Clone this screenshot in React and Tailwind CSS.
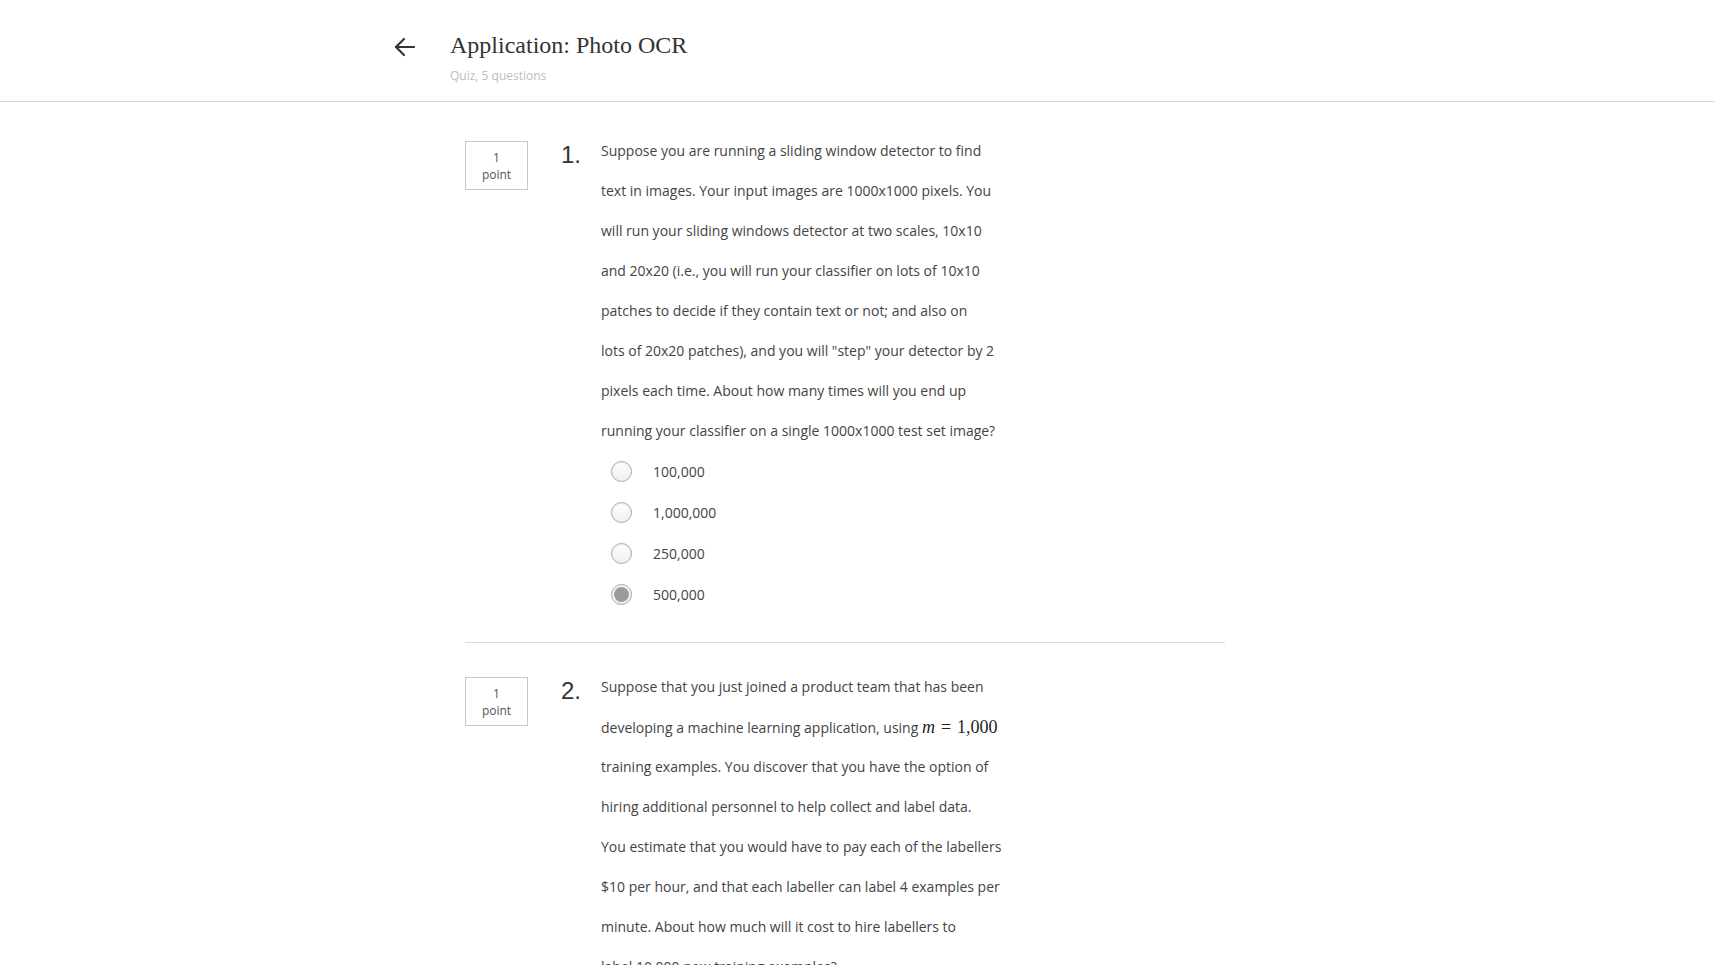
import React from 'react';

const q1Lines = [
    'Suppose you are running a sliding window detector to find',
    'text in images. Your input images are 1000x1000 pixels. You',
    'will run your sliding windows detector at two scales, 10x10',
    'and 20x20 (i.e., you will run your classifier on lots of 10x10',
    'patches to decide if they contain text or not; and also on',
    'lots of 20x20 patches), and you will "step" your detector by 2',
    'pixels each time. About how many times will you end up',
    'running your classifier on a single 1000x1000 test set image?',
];

const q1Options = [
    { label: '100,000', checked: false },
    { label: '1,000,000', checked: false },
    { label: '250,000', checked: false },
    { label: '500,000', checked: true },
];

const Math = () => (
    <span style={{ fontFamily: '"Liberation Serif", "DejaVu Serif", serif' }} className="text-[18px] text-[#222]">
        <span className="italic">m</span>
        <span className="mx-[6px]">=</span>
        <span>1,000</span>
    </span>
);

const q2Lines = [
    'Suppose that you just joined a product team that has been',
    <>developing a machine learning application, using <Math /></>,
    'training examples. You discover that you have the option of',
    'hiring additional personnel to help collect and label data.',
    'You estimate that you would have to pay each of the labellers',
    '$10 per hour, and that each labeller can label 4 examples per',
    'minute. About how much will it cost to hire labellers to',
    'label 10,000 new training examples?',
];

const Radio = ({ checked }) => (
    <div className="w-[21px] h-[21px] rounded-full border border-[#a9a9a9] bg-gradient-to-b from-white to-[#efefef] shadow-[inset_0_1px_2px_rgba(0,0,0,0.08)] flex items-center justify-center">
        {checked && <div className="w-[15px] h-[15px] rounded-full bg-[#9b9b9b]" />}
    </div>
);

const PointBox = () => (
    <div className="w-[63px] h-[49px] mt-[10px] border border-[#c8c8c8] flex flex-col items-center justify-center text-[12px] leading-[17px] text-[#555] shrink-0">
        <span>1</span>
        <span>point</span>
    </div>
);

const Question = ({ num, lines, options }) => (
    <div className="flex">
        <PointBox />
        <div
            className="ml-[33px] w-[40px] mt-[10px] text-[24px] leading-[28px] text-[#333]"
            style={{ fontFamily: '"Liberation Sans", Arial, sans-serif' }}
        >
            {num}.
        </div>
        <div className="flex flex-col">
            {lines.map((l, i) => (
                <div key={i} className="h-[40px] leading-[40px] text-[14px] text-[#444] whitespace-nowrap">{l}</div>
            ))}
            {options && (
                <div className="flex flex-col">
                    {options.map((o) => (
                        <div key={o.label} className="h-[41px] flex items-center">
                            <div className="ml-[10px] w-[42px]">
                                <Radio checked={o.checked} />
                            </div>
                            <span className="text-[14px] text-[#444]">{o.label}</span>
                        </div>
                    ))}
                </div>
            )}
        </div>
    </div>
);

export default function App() {
    return (
        <div className="h-screen overflow-hidden bg-white" style={{ fontFamily: '"Open Sans", "Noto Sans", sans-serif' }}>
            {/* Header */}
            <div className="h-[102px] border-b border-[#d6d6d6] flex items-start pl-[394px]">
                <svg width="21" height="20" viewBox="0 0 21 20" className="mt-[37px]" fill="none" stroke="#333" strokeWidth="2.2" strokeLinecap="round" strokeLinejoin="round">
                    <line x1="2" y1="10" x2="20" y2="10" />
                    <polyline points="10,2 2,10 10,18" />
                </svg>
                <div className="ml-[35px] mt-[30px]">
                    <h1 className="text-[24px] leading-[30px] text-[#333]" style={{ fontFamily: '"Liberation Serif", "DejaVu Serif", serif' }}>
                        Application: Photo OCR
                    </h1>
                    <p className="text-[12px] leading-[16px] mt-[8px] text-[#bdbdbd]">Quiz, 5 questions</p>
                </div>
            </div>

            {/* Questions */}
            <div className="ml-[465px] w-[760px] pt-[29px]">
                <Question num={1} lines={q1Lines} options={q1Options} />
                <div className="mt-[27px] border-t border-[#dcdcdc]" />
                <div className="pt-[24px]">
                    <Question num={2} lines={q2Lines} />
                </div>
            </div>
        </div>
    );
}
